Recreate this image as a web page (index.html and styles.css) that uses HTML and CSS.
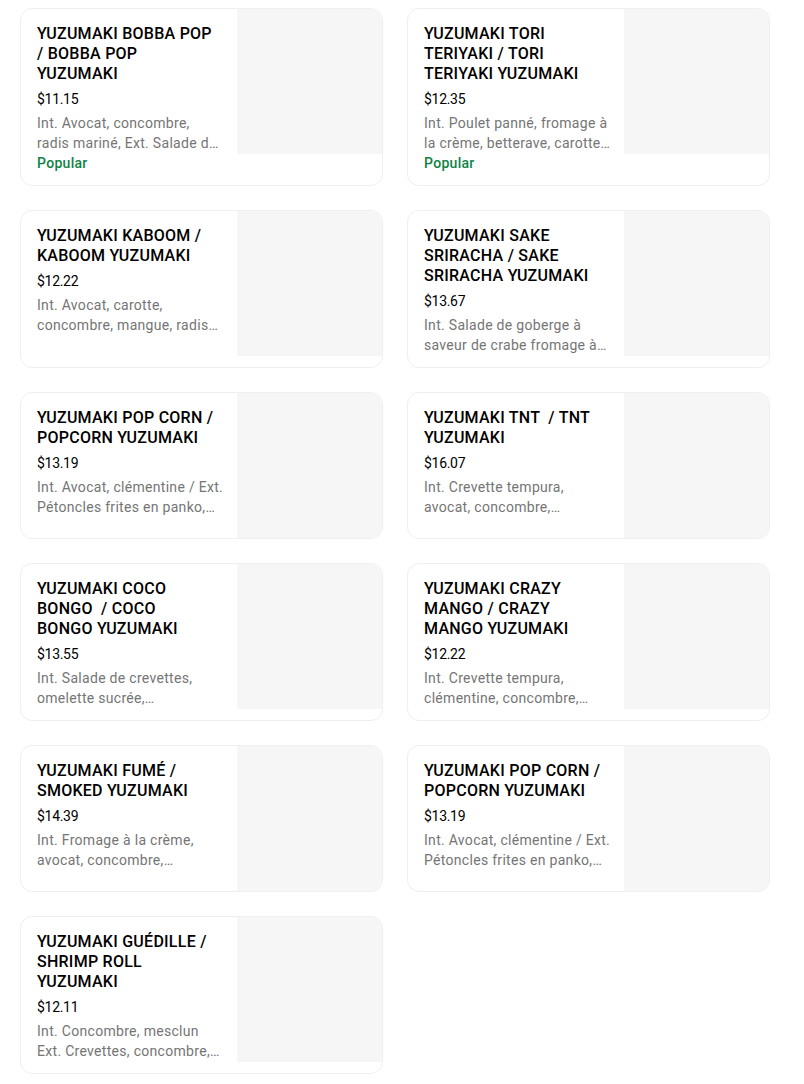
FILE: index.html
```html
<!DOCTYPE html>
<html lang="fr">
<head>
    <meta charset="UTF-8">
    <meta name="viewport" content="width=device-width, initial-scale=1.0">
    <title>Yuzumaki</title>
    <link rel="stylesheet" href="styles.css">
</head>
<body>

<main class="menu-grid">
    <!-- rangée 1 -->
    <div class="item-card">
        <div class="item-info">
            <h3 class="item-title">YUZUMAKI BOBBA POP / BOBBA POP YUZUMAKI</h3>
            <p class="item-price">$11.15</p>
            <p class="item-desc">Int. Avocat, concombre, radis mariné, Ext. Salade de goberge</p>
            <p class="item-tag">Popular</p>
        </div>
        <div class="item-photo"></div>
    </div>

    <div class="item-card">
        <div class="item-info">
            <h3 class="item-title">YUZUMAKI TORI TERIYAKI / TORI TERIYAKI YUZUMAKI</h3>
            <p class="item-price">$12.35</p>
            <p class="item-desc">Int. Poulet panné, fromage à la crème, betterave, carottes marinées</p>
            <p class="item-tag">Popular</p>
        </div>
        <div class="item-photo"></div>
    </div>

    <!-- rangée 2 -->
    <div class="item-card">
        <div class="item-info">
            <h3 class="item-title">YUZUMAKI KABOOM / KABOOM YUZUMAKI</h3>
            <p class="item-price">$12.22</p>
            <p class="item-desc">Int. Avocat, carotte, concombre, mangue, radis mariné</p>
        </div>
        <div class="item-photo"></div>
    </div>

    <div class="item-card">
        <div class="item-info">
            <h3 class="item-title">YUZUMAKI SAKE SRIRACHA / SAKE SRIRACHA YUZUMAKI</h3>
            <p class="item-price">$13.67</p>
            <p class="item-desc">Int. Salade de goberge à saveur de crabe fromage à la crème</p>
        </div>
        <div class="item-photo"></div>
    </div>

    <!-- rangée 3 -->
    <div class="item-card">
        <div class="item-info">
            <h3 class="item-title">YUZUMAKI POP CORN / POPCORN YUZUMAKI</h3>
            <p class="item-price">$13.19</p>
            <p class="item-desc">Int. Avocat, clémentine / Ext. Pétoncles frites en panko, sauce</p>
        </div>
        <div class="item-photo"></div>
    </div>

    <div class="item-card">
        <div class="item-info">
            <h3 class="item-title">YUZUMAKI TNT &nbsp;/ TNT YUZUMAKI</h3>
            <p class="item-price">$16.07</p>
            <p class="item-desc">Int. Crevette tempura, avocat, concombre, mayonnaise épicée</p>
        </div>
        <div class="item-photo"></div>
    </div>

    <!-- rangée 4 -->
    <div class="item-card">
        <div class="item-info">
            <h3 class="item-title">YUZUMAKI COCO BONGO &nbsp;/ COCO BONGO YUZUMAKI</h3>
            <p class="item-price">$13.55</p>
            <p class="item-desc">Int. Salade de crevettes, omelette sucrée, mayonnaise épicée</p>
        </div>
        <div class="item-photo"></div>
    </div>

    <div class="item-card">
        <div class="item-info">
            <h3 class="item-title">YUZUMAKI CRAZY MANGO / CRAZY MANGO YUZUMAKI</h3>
            <p class="item-price">$12.22</p>
            <p class="item-desc">Int. Crevette tempura, clémentine, concombre, mangue</p>
        </div>
        <div class="item-photo"></div>
    </div>

    <!-- rangée 5 -->
    <div class="item-card">
        <div class="item-info">
            <h3 class="item-title">YUZUMAKI FUMÉ / SMOKED YUZUMAKI</h3>
            <p class="item-price">$14.39</p>
            <p class="item-desc">Int. Fromage à la crème, avocat, concombre, pommes vertes</p>
        </div>
        <div class="item-photo"></div>
    </div>

    <div class="item-card">
        <div class="item-info">
            <h3 class="item-title">YUZUMAKI POP CORN / POPCORN YUZUMAKI</h3>
            <p class="item-price">$13.19</p>
            <p class="item-desc">Int. Avocat, clémentine / Ext. Pétoncles frites en panko, sauce</p>
        </div>
        <div class="item-photo"></div>
    </div>

    <!-- rangée 6 -->
    <div class="item-card">
        <div class="item-info">
            <h3 class="item-title">YUZUMAKI GUÉDILLE / SHRIMP ROLL YUZUMAKI</h3>
            <p class="item-price">$12.11</p>
            <p class="item-desc">Int. Concombre, mesclun Ext. Crevettes, concombre, mayo épicée</p>
        </div>
        <div class="item-photo"></div>
    </div>
</main>

</body>
</html>
```

FILE: styles.css
```css
body {
    margin: 0;
    font-family: Roboto, "Liberation Sans", Arial, sans-serif;
    background-color: #ffffff;
    color: #000000;
}

/* grille des plats */
.menu-grid {
    display: grid;
    grid-template-columns: 363px 363px;
    column-gap: 24px;
    row-gap: 24px;
    padding: 8px 0 0 20px;
    align-items: start;
}

.item-card {
    display: flex;
    border: 1px solid #efefef;
    border-radius: 12px;
    overflow: hidden;
    height: 100%;
    box-sizing: border-box;
}

.item-info {
    flex: 1;
    min-width: 0;
    padding: 15px 13px 12px 16px;
}

.item-title {
    margin: 0 10px 0 0;
    font-size: 16px;
    line-height: 20px;
    font-weight: 500;
    letter-spacing: 0.25px;
}

.item-price {
    margin: 5px 0 0 0;
    font-size: 14px;
    line-height: 20px;
    letter-spacing: -0.3px;
}

.item-desc {
    margin: 4px 0 0 0;
    font-size: 14px;
    line-height: 20px;
    letter-spacing: 0.3px;
    color: #757575;
    display: -webkit-box;
    -webkit-line-clamp: 2;
    -webkit-box-orient: vertical;
    overflow: hidden;
}

.item-tag {
    margin: 0;
    font-size: 14px;
    line-height: 20px;
    font-weight: 500;
    letter-spacing: 0.3px;
    color: #0e8345;
}

.item-photo {
    flex: none;
    width: 145px;
    height: 145px;
    background-color: #f6f6f6;
}
```
